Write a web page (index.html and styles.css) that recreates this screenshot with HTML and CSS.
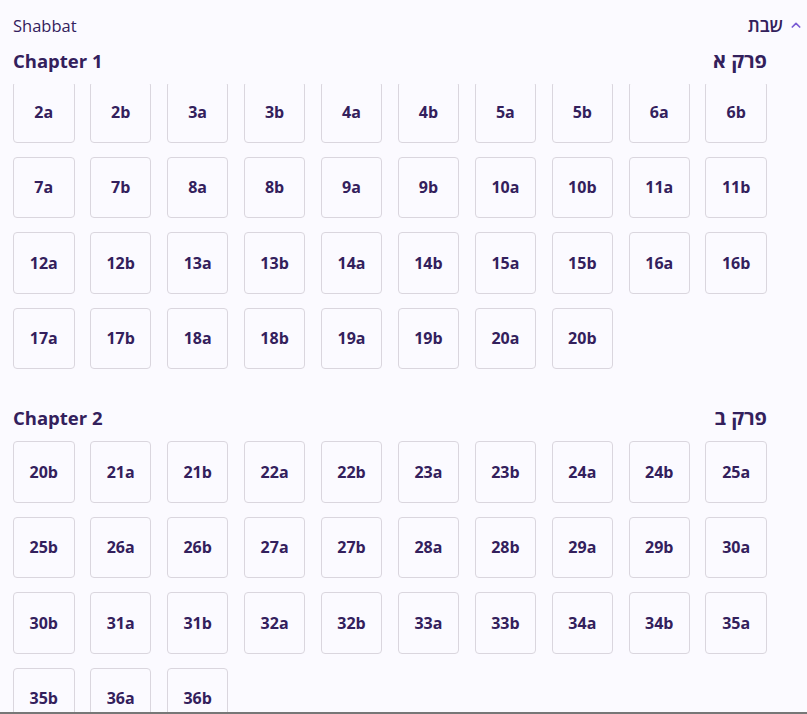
FILE: index.html
```html
<!DOCTYPE html>
<html lang="en">
<head>
<meta charset="utf-8">
<link rel="stylesheet" href="styles.css">
</head>
<body>
<div class="page">
  <header class="topbar">
    <span class="book">Shabbat</span>
    <span class="book-he"><svg class="chev" viewBox="0 0 12 12" width="12" height="12"><path d="M2.3 8 L6 4.3 L9.7 8" fill="none" stroke="currentColor" stroke-width="1.7" stroke-linecap="round" stroke-linejoin="round"/></svg><span dir="rtl" lang="he">שבת</span></span>
  </header>

  <section class="chapter first">
    <div class="chapter-head">
      <h2>Chapter 1</h2>
      <h2 dir="rtl" lang="he" class="he">פרק א</h2>
    </div>
    <div class="grid">
      <a class="cell">2a</a><a class="cell">2b</a><a class="cell">3a</a><a class="cell">3b</a><a class="cell">4a</a><a class="cell">4b</a><a class="cell">5a</a><a class="cell">5b</a><a class="cell">6a</a><a class="cell">6b</a>
      <a class="cell">7a</a><a class="cell">7b</a><a class="cell">8a</a><a class="cell">8b</a><a class="cell">9a</a><a class="cell">9b</a><a class="cell">10a</a><a class="cell">10b</a><a class="cell">11a</a><a class="cell">11b</a>
      <a class="cell">12a</a><a class="cell">12b</a><a class="cell">13a</a><a class="cell">13b</a><a class="cell">14a</a><a class="cell">14b</a><a class="cell">15a</a><a class="cell">15b</a><a class="cell">16a</a><a class="cell">16b</a>
      <a class="cell">17a</a><a class="cell">17b</a><a class="cell">18a</a><a class="cell">18b</a><a class="cell">19a</a><a class="cell">19b</a><a class="cell">20a</a><a class="cell">20b</a>
    </div>
  </section>

  <section class="chapter">
    <div class="chapter-head">
      <h2>Chapter 2</h2>
      <h2 dir="rtl" lang="he" class="he">פרק ב</h2>
    </div>
    <div class="grid">
      <a class="cell">20b</a><a class="cell">21a</a><a class="cell">21b</a><a class="cell">22a</a><a class="cell">22b</a><a class="cell">23a</a><a class="cell">23b</a><a class="cell">24a</a><a class="cell">24b</a><a class="cell">25a</a>
      <a class="cell">25b</a><a class="cell">26a</a><a class="cell">26b</a><a class="cell">27a</a><a class="cell">27b</a><a class="cell">28a</a><a class="cell">28b</a><a class="cell">29a</a><a class="cell">29b</a><a class="cell">30a</a>
      <a class="cell">30b</a><a class="cell">31a</a><a class="cell">31b</a><a class="cell">32a</a><a class="cell">32b</a><a class="cell">33a</a><a class="cell">33b</a><a class="cell">34a</a><a class="cell">34b</a><a class="cell">35a</a>
      <a class="cell">35b</a><a class="cell">36a</a><a class="cell">36b</a>
    </div>
  </section>
</div>
<div class="bottom-edge"></div>
</body>
</html>
```

FILE: styles.css
```css
html, body {
  margin: 0;
  padding: 0;
  background: #fbfaff;
  overflow: hidden;
}

body {
  font-family: "Open Sans", "DejaVu Sans", sans-serif;
  color: #33205c;
}

.page {
  padding: 0 0 0 13px;
}

.topbar {
  display: flex;
  justify-content: space-between;
  align-items: center;
  height: 50px;
  padding-right: 5px;
}

.book {
  font-size: 16.5px;
  font-weight: 400;
}

.book-he {
  display: flex;
  align-items: center;
  gap: 7px;
  font-size: 18px;
  font-weight: 600;
  flex-direction: row-reverse;
}

.chev {
  color: #7a5cd4;
}

.chapter {
  width: 754px;
}

.chapter-head {
  display: flex;
  justify-content: space-between;
  align-items: center;
  height: 24px;
  position: relative;
  z-index: 1;
  background: #fbfaff;
}

.first .chapter-head {
  margin-top: -1px;
  padding-bottom: 11px;
}

.chapter-head h2 {
  margin: 0;
  font-size: 18.5px;
  font-weight: 700;
  line-height: 24px;
}

.chapter-head h2.he {
  font-size: 20px;
  font-weight: 700;
}

.grid {
  display: grid;
  grid-template-columns: repeat(10, 61.5px);
  justify-content: space-between;
  row-gap: 14px;
}

.first .grid {
  margin-top: -3px;
}

.chapter + .chapter {
  margin-top: 37px;
}

.chapter + .chapter .grid {
  margin-top: 11px;
}

.cell {
  box-sizing: border-box;
  height: 61.5px;
  border: 1px solid #dad6de;
  border-radius: 4px;
  display: flex;
  align-items: center;
  justify-content: center;
  font-size: 16px;
  font-weight: 700;
  color: #33205c;
  text-decoration: none;
}

.bottom-edge {
  position: fixed;
  left: 0;
  right: 0;
  bottom: 0;
  height: 2px;
  background: #777777;
}
```
